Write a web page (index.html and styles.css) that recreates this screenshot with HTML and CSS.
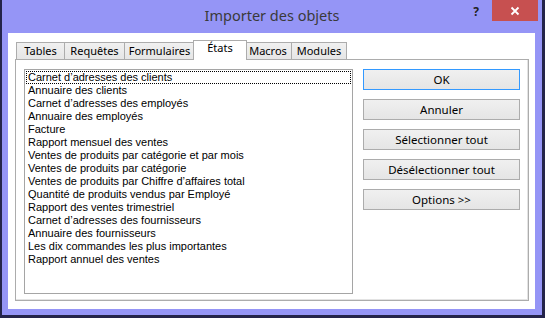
FILE: index.html
```html
<!DOCTYPE html>
<html lang="fr">
<head>
<meta charset="utf-8">
<title>Importer des objets</title>
<link rel="stylesheet" href="styles.css">
</head>
<body>
<div class="window">
  <div class="titlebar">
    <div class="title-spacer"></div>
    <div class="title">Importer des objets</div>
    <div class="controls">
      <span class="help">?</span>
      <span class="close"><svg width="10" height="10" viewBox="0 0 10 10"><path d="M1.5 1.5 L8.5 8.5 M8.5 1.5 L1.5 8.5" stroke="#fff" stroke-width="1.8" fill="none"/></svg></span>
    </div>
  </div>
  <div class="client">
    <div class="tabs">
      <div class="tab tab-tables">Tables</div>
      <div class="tab tab-req">Requêtes</div>
      <div class="tab tab-form">Formulaires</div>
      <div class="tab active">États</div>
      <div class="tab tab-macros">Macros</div>
      <div class="tab tab-modules">Modules</div>
    </div>
    <div class="panel">
      <div class="listbox">
        <div class="item focus">Carnet d’adresses des clients</div>
        <div class="item">Annuaire des clients</div>
        <div class="item">Carnet d’adresses des employés</div>
        <div class="item">Annuaire des employés</div>
        <div class="item">Facture</div>
        <div class="item">Rapport mensuel des ventes</div>
        <div class="item">Ventes de produits par catégorie et par mois</div>
        <div class="item">Ventes de produits par catégorie</div>
        <div class="item">Ventes de produits par Chiffre d’affaires total</div>
        <div class="item">Quantité de produits vendus par Employé</div>
        <div class="item">Rapport des ventes trimestriel</div>
        <div class="item">Carnet d’adresses des fournisseurs</div>
        <div class="item">Annuaire des fournisseurs</div>
        <div class="item">Les dix commandes les plus importantes</div>
        <div class="item">Rapport annuel des ventes</div>
      </div>
      <div class="buttons">
        <div class="btn default">OK</div>
        <div class="btn">Annuler</div>
        <div class="btn">Sélectionner tout</div>
        <div class="btn">Désélectionner tout</div>
        <div class="btn">Options &gt;&gt;</div>
      </div>
    </div>
  </div>
</div>
</body>
</html>
```
FILE: styles.css
```css
* { box-sizing: border-box; }
html, body { margin: 0; padding: 0; background: #fff; }
.window {
  width: 545px;
  height: 318px;
  background: #9595f6;
  border-left: 2px solid #24244a;
  border-right: 3px solid #24244a;
  border-bottom: 3px solid #24244a;
  display: flex;
  flex-direction: column;
}
.titlebar {
  height: 33px;
  flex: none;
  display: grid;
  grid-template-columns: 1fr auto 1fr;
  align-items: start;
}
.title {
  font-family: "Noto Sans", sans-serif;
  font-size: 14.5px;
  color: #3a3a3a;
  line-height: 20px;
  padding-top: 5px;
}
.controls {
  justify-self: end;
  display: flex;
  align-items: flex-start;
  margin-right: 4px;
}
.help {
  font-family: "Noto Sans", sans-serif;
  font-weight: bold;
  font-size: 12px;
  color: #222;
  line-height: 14px;
  margin-top: 5px;
  margin-right: 13px;
}
.close {
  width: 46px;
  height: 21px;
  background: #c75050;
  display: flex;
  align-items: center;
  justify-content: center;
}
.client {
  flex: 1;
  margin: 0 7px 6px 6px;
  background: #fff;
  padding: 7px 6px 8px 7px;
  display: flex;
  flex-direction: column;
}
.tabs {
  display: flex;
  align-items: flex-end;
  height: 19px;
  padding-left: 1px;
  position: relative;
  z-index: 1;
}
.tab {
  font-family: "Noto Sans", sans-serif;
  font-size: 11px;
  color: #000;
  height: 17px;
  line-height: 15px;
  padding: 0;
  text-align: center;
  border: 1px solid #acacac;
  border-bottom: none;
  background: linear-gradient(#f0f0f0, #e6e6e6);
  margin-left: -1px;
  white-space: nowrap;
}
.tab:first-child { margin-left: 0; }
.tab-tables { width: 49px; }
.tab-req { width: 61px; }
.tab-form { width: 71px; }
.tab-macros { width: 48px; }
.tab-modules { width: 56px; }
.tab.active {
  background: #fff;
  height: 20px;
  width: 54px;
  margin: 0 -2px -1px -2px;
  line-height: 14px;
  position: relative;
  z-index: 2;
}
.panel {
  height: 242px;
  border: 1px solid #acacac;
  box-shadow: inset -1px -1px 0 #e3e3e3;
  padding: 9px 8px 6px 8px;
  display: flex;
  gap: 10px;
}
.listbox {
  width: 329px;
  border: 1px solid #a5a5a5;
  padding: 1px 0 0 0;
}
.item {
  font-family: "Liberation Sans", Arial, sans-serif;
  font-size: 11px;
  color: #000;
  height: 13px;
  line-height: 13px;
  padding-left: 3px;
  white-space: nowrap;
}
.item.focus {
  outline: 1px dotted #000;
  outline-offset: -1px;
  margin: 0 1px;
  padding-left: 2px;
}
.buttons {
  width: 157px;
  display: flex;
  flex-direction: column;
  gap: 9px;
}
.btn {
  height: 21px;
  border: 1px solid #acacac;
  background: linear-gradient(#f0f0f0, #e5e5e5);
  font-family: "Noto Sans", sans-serif;
  font-size: 11.5px;
  line-height: 19px;
  text-align: center;
  color: #000;
}
.btn.default { border-color: #3399ff; }
```
